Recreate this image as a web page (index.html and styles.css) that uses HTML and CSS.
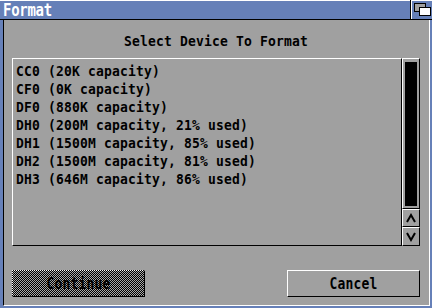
FILE: index.html
```html
<html>
<head>
	<title>Format</title>
	<link rel="stylesheet" href="styles.css">
</head>
<body>
	<div class="window">
		<div class="titlebar">
			<span class="title">Format</span>
			<div class="depth">
				<svg width="19" height="19" viewBox="0 0 19 19">
					<rect x="1.5" y="3.5" width="11" height="8" fill="#a0a0a0" stroke="#000"/>
					<rect x="6.5" y="7.5" width="11" height="8" fill="#fff" stroke="#000"/>
				</svg>
			</div>
		</div>

		<div class="frame">
			<div class="heading">Select Device To Format</div>

			<div class="listrow">
				<div class="list">
					<div class="item">CC0 (20K capacity)</div>
					<div class="item">CF0 (0K capacity)</div>
					<div class="item">DF0 (880K capacity)</div>
					<div class="item">DH0 (200M capacity, 21% used)</div>
					<div class="item">DH1 (1500M capacity, 85% used)</div>
					<div class="item">DH2 (1500M capacity, 81% used)</div>
					<div class="item">DH3 (646M capacity, 86% used)</div>
				</div>
				<div class="scrollbar">
					<div class="scroller">
						<div class="knob"></div>
					</div>
					<div class="arrow">
						<svg width="12" height="12" viewBox="0 0 12 12">
							<polyline points="2,10 6,3 10,10" fill="none" stroke="#000" stroke-width="2"/>
						</svg>
					</div>
					<div class="arrow">
						<svg width="12" height="12" viewBox="0 0 12 12">
							<polyline points="2,2 6,9 10,2" fill="none" stroke="#000" stroke-width="2"/>
						</svg>
					</div>
				</div>
			</div>

			<div class="buttons">
				<div class="button selected"><span class="label">Continue</span></div>
				<div class="button"><span class="label">Cancel</span></div>
			</div>
		</div>
	</div>
</body>
</html>
```

FILE: styles.css
```css
body {
	margin: 0;
	width: 432px;
	height: 308px;
	overflow: hidden;
	background-color: #6680b8;
	font-family: "DejaVu Sans Mono", "Liberation Mono", monospace;
	font-weight: bold;
	font-size: 13px;
	letter-spacing: 0.17px;
	color: #000;
}

.window {
	display: flex;
	flex-direction: column;
	height: 308px;
}

.titlebar {
	height: 18px;
	border-top: 1px solid #fff;
	border-bottom: 1px solid #000;
	display: flex;
	align-items: center;
}

.title {
	display: inline-block;
	color: #fff;
	margin-left: 3px;
	font-size: 14px;
	letter-spacing: -0.3px;
	transform: scaleY(1.25);
	flex: 1;
}

.depth {
	width: 21px;
	height: 19px;
	margin-top: -1px;
	border-left: 1px solid #000;
	box-shadow: inset 1px 0 0 #fff;
	display: flex;
	justify-content: flex-end;
}

.frame {
	height: 285px;
	margin-left: 3px;
	margin-right: 2px;
	border-left: 1px solid #000;
	border-right: 1px solid #fff;
	border-bottom: 1px solid #fff;
	background-color: #a0a0a0;
	padding: 0 9px 0 8px;
	display: flex;
	flex-direction: column;
}

.heading {
	text-align: center;
	line-height: 18px;
	margin-top: 13px;
	margin-bottom: 7px;
	transform: scaleY(1.12);
}

.listrow {
	display: flex;
	height: 188px;
}

.list {
	width: 383px;
	padding: 4px 3px 0 3px;
	border-top: 1px solid #fff;
	border-left: 1px solid #fff;
	border-right: 1px solid #000;
	border-bottom: 1px solid #000;
}

.item {
	height: 18px;
	line-height: 18px;
	white-space: nowrap;
	transform: scaleY(1.12);
}

.scrollbar {
	width: 18px;
	display: flex;
	flex-direction: column;
}

.scroller {
	height: 148px;
	border-top: 1px solid #fff;
	border-left: 1px solid #fff;
	border-right: 1px solid #000;
	border-bottom: 1px solid #000;
	padding: 3px 2px 2px 2px;
}

.knob {
	height: 100%;
	background-color: #000;
}

.arrow {
	height: 17px;
	border-top: 1px solid #fff;
	border-left: 1px solid #fff;
	border-right: 1px solid #000;
	border-bottom: 1px solid #000;
	display: flex;
	align-items: center;
	justify-content: center;
}

.buttons {
	display: flex;
	justify-content: space-between;
	margin-top: 24px;
}

.button {
	width: 131px;
	height: 25px;
	line-height: 25px;
	text-align: center;
	border-top: 1px solid #fff;
	border-left: 1px solid #fff;
	border-right: 1px solid #000;
	border-bottom: 1px solid #000;
}

.label {
	display: inline-block;
	transform: scaleY(1.15);
}

.selected {
	border-top: 1px dotted #fff;
	border-left: 1px dotted #fff;
	background: repeating-conic-gradient(#000 0% 25%, #a8a8a8 0% 50%) 0 0 / 2px 2px;
}
```
